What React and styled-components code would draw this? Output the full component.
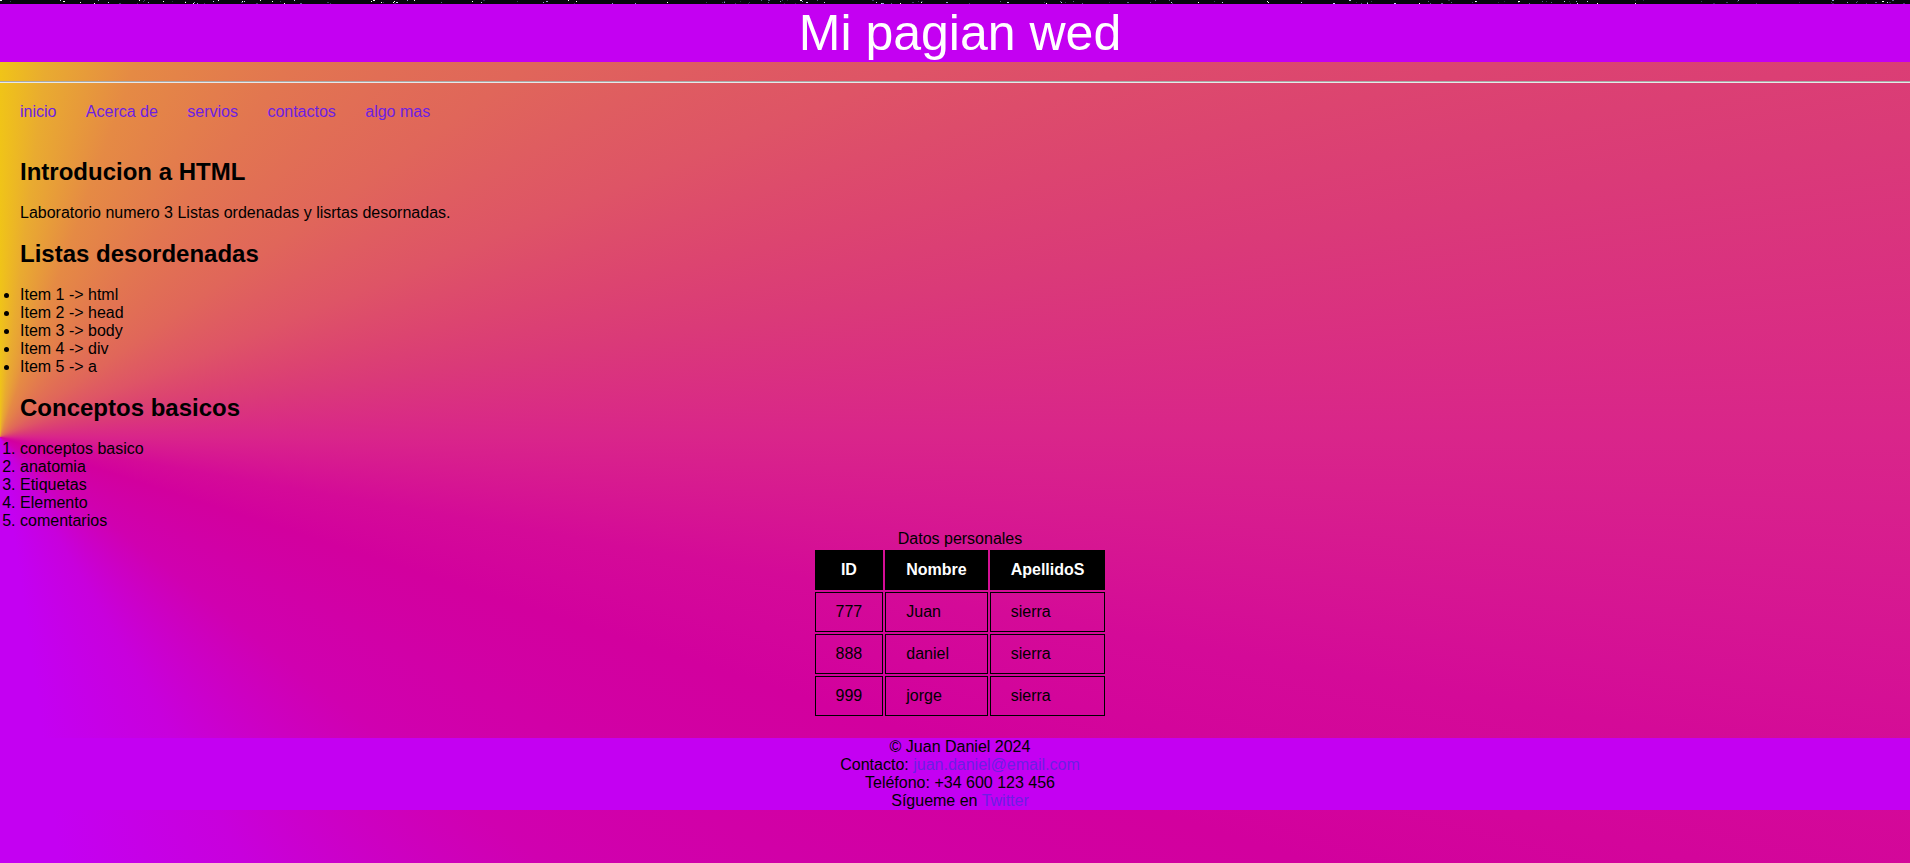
import React from 'react';
import styled, { createGlobalStyle } from 'styled-components';

const GlobalStyle = createGlobalStyle`
  html {
    min-height: 100%;
    background: conic-gradient(
      from 0deg at 0px 437px,
      #f0c418 0deg,
      #e9ab30 7deg,
      #e58a44 20deg,
      #e27650 38deg,
      #e0665a 55deg,
      #de5466 68deg,
      #dc4470 76deg,
      #da3a78 81deg,
      #d9258a 90deg,
      #d40a98 100deg,
      #d2009e 108deg,
      #d000b0 128deg,
      #c800dc 150deg,
      #c400f2 172deg,
      #c400f2 360deg
    );
  }
  body {
    margin: 0;
    font-family: "Liberation Sans", Arial, sans-serif;
    font-size: 16px;
    color: #000;
  }
`;

const StarStrip = styled.svg`
  display: block;
  width: 100%;
  height: 4px;
  background: #05060c;
`;

const Header = styled.header`
  background: #c400f2;
`;

const Title = styled.h1`
  margin: 0;
  padding-left: 10px;
  font-size: 50px;
  font-weight: normal;
  color: #fff;
  text-align: center;
`;

const TopSection = styled.section`
  display: flow-root;
`;

const Rule = styled.hr`
  margin: 19px 0 0;
  height: 0;
  border: 0;
  border-top: 1px solid #a9a9a9;
  border-bottom: 1px solid #e8e8e8;
`;

const Nav = styled.nav`
  display: flex;
  gap: 29.4px;
  padding: 20px 20px 19px;
`;

const Link = styled.a`
  color: #6c1fe4;
  text-decoration: none;
`;

const Heading = styled.h2`
  margin: 18px 0;
  padding: 0 20px;
  font-size: 24px;
  font-weight: bold;
`;

const Text = styled.p`
  margin: 18px 0;
  padding: 0 20px;
`;

const BulletList = styled.ul`
  margin: 16px 0;
  padding-left: 20px;
`;

const NumberList = styled.ol`
  margin: 0;
  padding-left: 20px;
`;

const TableWrap = styled.div`
  display: flex;
  justify-content: center;
  padding-left: 10px;
`;

const Table = styled.table`
  border-collapse: separate;
  border-spacing: 2px;
`;

const Caption = styled.caption`
  text-align: center;
`;

const HeadCell = styled.th`
  padding: 10px 20px;
  border: 1px solid #000;
  background: #000;
  color: #fff;
  font-weight: bold;
`;

const Cell = styled.td`
  padding: 10px 20px;
  border: 1px solid #000;
  text-align: ${(p) => (p.$center ? 'center' : 'left')};
`;

const Footer = styled.footer`
  margin-top: 20px;
  padding-left: 10px;
  background: #c400f2;
  text-align: center;
`;

const FooterLine = styled.p`
  margin: 0;
`;

const makeStars = () => {
  let seed = 17;
  const rnd = () => {
    seed = (seed * 16807) % 2147483647;
    return seed / 2147483647;
  };
  const tones = ['#3a3f66', '#5a6490', '#8f9ad8', '#c8d0ff', '#ffffff', '#2a2e48'];
  return Array.from({ length: 170 }, (_, i) => ({
    id: i,
    x: Math.floor(rnd() * 1910),
    y: Math.floor(rnd() * 4),
    w: rnd() > 0.8 ? 2 : 1,
    fill: tones[Math.floor(rnd() * tones.length)],
  }));
};

const stars = makeStars();

const navItems = ['inicio', 'Acerca de', 'servios', 'contactos', 'algo mas'];
const listItems = ['Item 1 -> html', 'Item 2 -> head', 'Item 3 -> body', 'Item 4 -> div', 'Item 5 -> a'];
const basics = ['conceptos basico', 'anatomia', 'Etiquetas', 'Elemento', 'comentarios'];
const people = [
    { id: 777, name: 'Juan', last: 'sierra' },
    { id: 888, name: 'daniel', last: 'sierra' },
    { id: 999, name: 'jorge', last: 'sierra' },
];

const App = () => {
    return (
        <>
            <GlobalStyle />
            <StarStrip viewBox="0 0 1910 4" preserveAspectRatio="none">
                {stars.map((s) => (
                    <rect key={s.id} x={s.x} y={s.y} width={s.w} height={1} fill={s.fill} />
                ))}
            </StarStrip>
            <Header>
                <Title>Mi pagian wed</Title>
            </Header>
            <TopSection>
                <Rule />
                <Nav>
                    {navItems.map((item) => (
                        <Link key={item} href="#">{item}</Link>
                    ))}
                </Nav>
                <Heading>Introducion a HTML</Heading>
                <Text>Laboratorio numero 3 Listas ordenadas y lisrtas desornadas.</Text>
                <Heading>Listas desordenadas</Heading>
                <BulletList>
                    {listItems.map((item) => <li key={item}>{item}</li>)}
                </BulletList>
                <Heading>Conceptos basicos</Heading>
            </TopSection>
            <NumberList>
                {basics.map((item) => <li key={item}>{item}</li>)}
            </NumberList>
            <TableWrap>
                <Table>
                    <Caption>Datos personales</Caption>
                    <thead>
                        <tr>
                            <HeadCell>ID</HeadCell>
                            <HeadCell>Nombre</HeadCell>
                            <HeadCell>ApellidoS</HeadCell>
                        </tr>
                    </thead>
                    <tbody>
                        {people.map((p) => (
                            <tr key={p.id}>
                                <Cell $center>{p.id}</Cell>
                                <Cell>{p.name}</Cell>
                                <Cell>{p.last}</Cell>
                            </tr>
                        ))}
                    </tbody>
                </Table>
            </TableWrap>
            <Footer>
                <FooterLine>© Juan Daniel 2024</FooterLine>
                <FooterLine>Contacto: <Link href="#">juan.daniel@email.com</Link></FooterLine>
                <FooterLine>Teléfono: +34 600 123 456</FooterLine>
                <FooterLine>Sígueme en <Link href="#">Twitter</Link></FooterLine>
            </Footer>
        </>
    );
};

export default App;
